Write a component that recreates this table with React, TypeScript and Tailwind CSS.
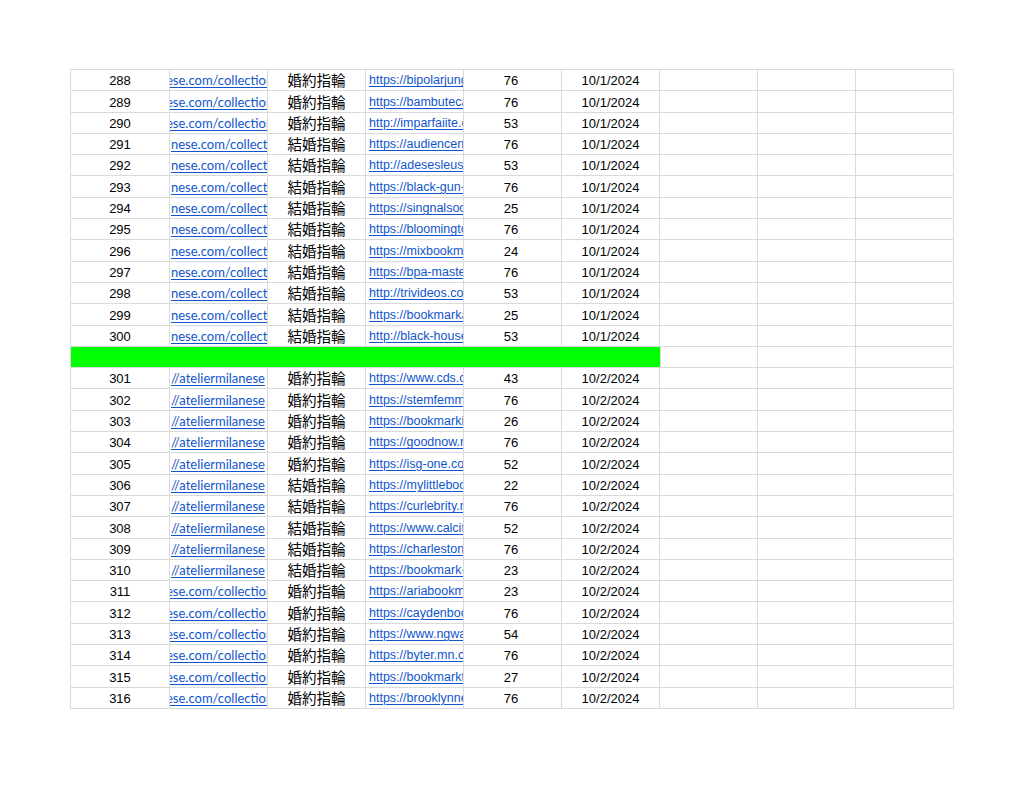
const RING_A = '婚約指輪';
const RING_B = '結婚指輪';

type Row = { n: number; path: string; kind: 'a' | 'b' | 'c'; ring: string; url: string; val: number; date: string };

const first: [number, number, string, string, number][] = [
  [288, 0, RING_A, 'https://bipolarjungl', 76],
  [289, 0, RING_A, 'https://bambutecas', 76],
  [290, 0, RING_A, 'http://imparfaiite.co', 53],
  [291, 1, RING_B, 'https://audiencenow', 76],
  [292, 1, RING_B, 'http://adesesleus.c', 53],
  [293, 1, RING_B, 'https://black-gun-cl', 76],
  [294, 1, RING_B, 'https://singnalsocial', 25],
  [295, 1, RING_B, 'https://bloomingtonl', 76],
  [296, 1, RING_B, 'https://mixbookmark', 24],
  [297, 1, RING_B, 'https://bpa-mastery', 76],
  [298, 1, RING_B, 'http://trivideos.com', 53],
  [299, 1, RING_B, 'https://bookmarkaho', 25],
  [300, 1, RING_B, 'http://black-househ', 53],
];

const second: [number, number, string, string, number][] = [
  [301, 2, RING_A, 'https://www.cds.com', 43],
  [302, 2, RING_A, 'https://stemfemmes', 76],
  [303, 2, RING_A, 'https://bookmarking', 26],
  [304, 2, RING_A, 'https://goodnow.rev', 76],
  [305, 2, RING_A, 'https://isg-one.com', 52],
  [306, 2, RING_B, 'https://mylittlebookm', 22],
  [307, 2, RING_B, 'https://curlebrity.net', 76],
  [308, 2, RING_B, 'https://www.calcitro', 52],
  [309, 2, RING_B, 'https://charlestonlin', 76],
  [310, 2, RING_B, 'https://bookmark-dof', 23],
  [311, 0, RING_A, 'https://ariabookmar', 23],
  [312, 0, RING_A, 'https://caydenbookm', 76],
  [313, 0, RING_A, 'https://www.ngwacc', 54],
  [314, 0, RING_A, 'https://byter.mn.co', 76],
  [315, 0, RING_A, 'https://bookmarktrac', 27],
  [316, 0, RING_A, 'https://brooklynnew', 76],
];

const paths = ['ese.com/collection', 'nese.com/collectio', '//ateliermilanese'];
const kinds: Row['kind'][] = ['a', 'b', 'c'];

const toRows = (list: typeof first, date: string): Row[] =>
  list.map(([n, p, ring, url, val]) => ({ n, path: paths[p], kind: kinds[p], ring, url, val, date }));

const cell = 'h-full border-r border-b border-[#dadada] flex items-end pb-[2px] overflow-hidden whitespace-nowrap';
const cols = 'grid grid-cols-[99px_98px_98px_98px_98px_98px_98px_98px_98px] h-[21.3px]';

function DataRow({ row }: { row: Row }) {
  return (
    <div className={cols}>
      <div className={`${cell} justify-center text-[13px] leading-[15px] text-black`}>{row.n}</div>
      <div className={`${cell} text-[13px] leading-[16px] text-[#1155cc] font-['Lato','Open_Sans',sans-serif]`}>
        <span
          className={`underline underline-offset-[2px] decoration-1 ${
            row.kind === 'a' ? '-ml-[4px]' : 'ml-[1px]'
          }`}
        >
          {row.path}
        </span>
      </div>
      <div className={`${cell} justify-center text-[14.5px] leading-[17px] text-black font-['Noto_Sans_CJK_JP','Noto_Sans_CJK_SC',sans-serif] pb-[1px]`}>
        {row.ring}
      </div>
      <div className={`${cell} pl-[3px] text-[12.5px] leading-[15px] text-[#1155cc]`}>
        <span className="underline underline-offset-[2px] decoration-1">{row.url}</span>
      </div>
      <div className={`${cell} justify-center pr-[3px] text-[13px] leading-[15px] text-black`}>{row.val}</div>
      <div className={`${cell} justify-center text-[13px] leading-[15px] text-black`}>{row.date}</div>
      <div className={cell} />
      <div className={cell} />
      <div className={cell} />
    </div>
  );
}

export default function App() {
  const rowsA = toRows(first, '10/1/2024');
  const rowsB = toRows(second, '10/2/2024');

  return (
    <div className="min-h-[791px] w-[1024px] bg-white pt-[69px] pl-[70px] font-['Liberation_Sans',Arial,sans-serif]">
      <div className="w-[884px] border-l border-t border-[#dadada]">
        {rowsA.map((r) => (
          <DataRow key={r.n} row={r} />
        ))}

        {/* separator */}
        <div className={cols}>
          <div className="col-span-6 h-full bg-[#00ff00] border-b border-[#dadada]" />
          <div className="h-full border-r border-b border-l border-[#dadada]" />
          <div className="h-full border-r border-b border-[#dadada]" />
          <div className="h-full border-r border-b border-[#dadada]" />
        </div>

        {rowsB.map((r) => (
          <DataRow key={r.n} row={r} />
        ))}
      </div>
    </div>
  );
}
